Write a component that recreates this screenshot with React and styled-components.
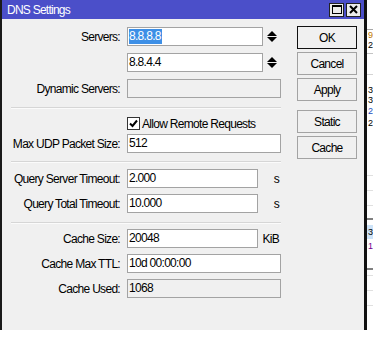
import React from 'react';
import styled, { createGlobalStyle } from 'styled-components';

const Global = createGlobalStyle`
  html, body { margin: 0; padding: 0; background: #fff; }
  body {
    font-family: "Liberation Sans", Arial, sans-serif;
    font-size: 12px;
    letter-spacing: -0.7px;
    color: #000;
  }
  * { box-sizing: border-box; }
`;

const Screen = styled.div`
  display: flex;
  align-items: flex-start;
  width: 373px;
  height: 349px;
  overflow: hidden;
`;

const Window = styled.div`
  flex-shrink: 0;
  width: 367px;
  height: 330px;
  display: flex;
  flex-direction: column;
  background: #f0f0f0;
  border-left: 2px solid #1a1a1a;
  border-right: 3px solid #111;
`;

const TitleBar = styled.div`
  height: 19px;
  background: #4b4fc9;
  color: #fff;
  display: flex;
  align-items: center;
  padding: 0 3px 0 5px;
  font-size: 12px;
  letter-spacing: -0.75px;
`;

const Title = styled.div`
  flex: 1;
  padding-top: 1px;
`;

const TitleButtons = styled.div`
  display: flex;
  gap: 2px;
`;

const TitleButton = styled.div`
  width: 15px;
  height: 14px;
  background: #ececec;
  border: 1px solid #222;
  display: flex;
  align-items: center;
  justify-content: center;
`;

const Body = styled.div`
  display: flex;
  padding-top: 7px;
  gap: 16px;
`;

const Form = styled.div`
  width: 279px;
  display: flex;
  flex-direction: column;
  padding-top: 1px;
`;

const Section = styled.div`
  display: flex;
  flex-direction: column;
  gap: ${p => p.$gap}px;
`;

const Separator = styled.div`
  margin: ${p => p.$top}px 0 ${p => p.$bottom}px 9px;
  width: 270px;
  height: 2px;
  border-top: 1px solid #d6d6d6;
  border-bottom: 1px solid #fbfbfb;
`;

const Row = styled.div`
  display: grid;
  grid-template-columns: 118px 1fr;
  column-gap: 7px;
  height: 19px;
  align-items: center;
`;

const Label = styled.div`
  text-align: right;
  white-space: nowrap;
`;

const Field = styled.div`
  display: flex;
  align-items: center;
  height: 19px;
`;

const Input = styled.div`
  width: ${p => p.$w}px;
  height: 19px;
  border: 1px solid #a3a3a3;
  background: ${p => (p.$disabled ? '#f0f0f0' : '#fff')};
  padding-left: 1px;
  line-height: 17px;
  white-space: nowrap;
  overflow: hidden;
`;

const Selected = styled.span`
  display: inline-block;
  background: #3d8fe6;
  color: #fff;
  line-height: 15px;
  padding-right: 1px;
`;

const Spinner = styled.div`
  width: 18px;
  display: flex;
  justify-content: center;
  align-items: center;
`;

const Unit = styled.div`
  width: 23px;
  text-align: right;
  padding-right: 2px;
`;

const CheckRow = styled.div`
  display: flex;
  align-items: center;
  height: 19px;
  padding-left: 125px;
  gap: 2px;
`;

const CheckBox = styled.div`
  width: 13px;
  height: 13px;
  border: 1px solid #333;
  background: #fff;
  display: flex;
  align-items: center;
  justify-content: center;
`;

const Buttons = styled.div`
  display: flex;
  flex-direction: column;
  width: 60px;
`;

const Button = styled.button`
  width: 60px;
  height: 23px;
  margin-top: ${p => p.$mt || 0}px;
  padding: 0;
  background: #f0f0f0;
  border: 1px solid ${p => (p.$default ? '#111' : '#a3a3a3')};
  font-family: inherit;
  font-size: 12px;
  letter-spacing: -0.7px;
  color: #000;
`;

const Strip = styled.div`
  flex: 1;
  display: flex;
  flex-direction: column;
  background: #fff;
  overflow: hidden;
`;

const StripRow = styled.div`
  height: ${p => p.$h}px;
  flex-shrink: 0;
  overflow: hidden;
  background: ${p => p.$bg || 'transparent'};
  color: ${p => p.$color || '#000'};
  font-size: 9px;
  letter-spacing: 0;
  line-height: ${p => p.$h}px;
  padding-left: 1px;
  white-space: nowrap;
`;

const SpinIcon = () => (
  <svg width="10" height="11" viewBox="0 0 10 11">
    <polygon points="0,5 5,0 10,5" fill="#000" />
    <polygon points="0,6 10,6 5,11" fill="#000" />
  </svg>
);

const CheckIcon = () => (
  <svg width="9" height="9" viewBox="0 0 9 9">
    <path d="M1 4.5 L3.5 7 L8 1.5" stroke="#000" strokeWidth="2" fill="none" />
  </svg>
);

const stripRows = [
  { h: 29 },
  { h: 1, bg: '#a8a8a8' },
  { h: 10, text: '9', color: '#c07800' },
  { h: 10, text: '2' },
  { h: 3 },
  { h: 1, bg: '#c4c4c4' },
  { h: 20 },
  { h: 1, bg: '#d4d4d4' },
  { h: 10 },
  { h: 10, text: '3' },
  { h: 10, text: '3' },
  { h: 12, text: '2', color: '#2050c0' },
  { h: 12, text: '2' },
  { h: 46 },
  { h: 1, bg: '#e0e0e0' },
  { h: 14 },
  { h: 1, bg: '#e0e0e0' },
  { h: 14 },
  { h: 1, bg: '#e0e0e0' },
  { h: 12 },
  { h: 2, bg: '#808080' },
  { h: 5 },
  { h: 14, text: '3', bg: '#cde3f8' },
  { h: 14, text: '1', color: '#700090' },
  { h: 15 },
  { h: 2, bg: '#808080' },
  { h: 5 },
  { h: 1, bg: '#e0e0e0' },
  { h: 14 },
  { h: 1, bg: '#e0e0e0' },
  { h: 14 },
  { h: 1, bg: '#e0e0e0' },
];

export default function App() {
  return (
    <>
      <Global />
      <Screen>
        <Window>
          <TitleBar>
            <Title>DNS Settings</Title>
            <TitleButtons>
              <TitleButton>
                <svg width="10" height="9" viewBox="0 0 10 9">
                  <rect x="0.5" y="0.5" width="9" height="8" fill="none" stroke="#000" />
                  <rect x="0" y="0" width="10" height="2" fill="#000" />
                </svg>
              </TitleButton>
              <TitleButton>
                <svg width="9" height="9" viewBox="0 0 9 9">
                  <path d="M1 1 L8 8 M8 1 L1 8" stroke="#000" strokeWidth="2" />
                </svg>
              </TitleButton>
            </TitleButtons>
          </TitleBar>
          <Body>
            <Form>
              <Section $gap={7}>
                <Row>
                  <Label>Servers:</Label>
                  <Field>
                    <Input $w={136}><Selected>8.8.8.8</Selected></Input>
                    <Spinner><SpinIcon /></Spinner>
                  </Field>
                </Row>
                <Row>
                  <Label></Label>
                  <Field>
                    <Input $w={136}>8.8.4.4</Input>
                    <Spinner><SpinIcon /></Spinner>
                  </Field>
                </Row>
                <Row>
                  <Label>Dynamic Servers:</Label>
                  <Field>
                    <Input $w={154} $disabled></Input>
                  </Field>
                </Row>
              </Section>
              <Separator $top={9} $bottom={5} />
              <Section $gap={1}>
                <CheckRow>
                  <CheckBox><CheckIcon /></CheckBox>
                  <span>Allow Remote Requests</span>
                </CheckRow>
                <Row>
                  <Label>Max UDP Packet Size:</Label>
                  <Field>
                    <Input $w={154}>512</Input>
                  </Field>
                </Row>
              </Section>
              <Separator $top={8} $bottom={6} />
              <Section $gap={6}>
                <Row>
                  <Label>Query Server Timeout:</Label>
                  <Field>
                    <Input $w={131}>2.000</Input>
                    <Unit>s</Unit>
                  </Field>
                </Row>
                <Row>
                  <Label>Query Total Timeout:</Label>
                  <Field>
                    <Input $w={131}>10.000</Input>
                    <Unit>s</Unit>
                  </Field>
                </Row>
              </Section>
              <Separator $top={9} $bottom={5} />
              <Section $gap={6}>
                <Row>
                  <Label>Cache Size:</Label>
                  <Field>
                    <Input $w={131}>20048</Input>
                    <Unit>KiB</Unit>
                  </Field>
                </Row>
                <Row>
                  <Label>Cache Max TTL:</Label>
                  <Field>
                    <Input $w={154}>10d 00:00:00</Input>
                  </Field>
                </Row>
                <Row>
                  <Label>Cache Used:</Label>
                  <Field>
                    <Input $w={154} $disabled>1068</Input>
                  </Field>
                </Row>
              </Section>
            </Form>
            <Buttons>
              <Button $default>OK</Button>
              <Button $mt={3}>Cancel</Button>
              <Button $mt={3}>Apply</Button>
              <Button $mt={9}>Static</Button>
              <Button $mt={3}>Cache</Button>
            </Buttons>
          </Body>
        </Window>
        <Strip>
          {stripRows.map((r, i) => (
            <StripRow key={i} $h={r.h} $bg={r.bg} $color={r.color}>{r.text}</StripRow>
          ))}
        </Strip>
      </Screen>
    </>
  );
}
